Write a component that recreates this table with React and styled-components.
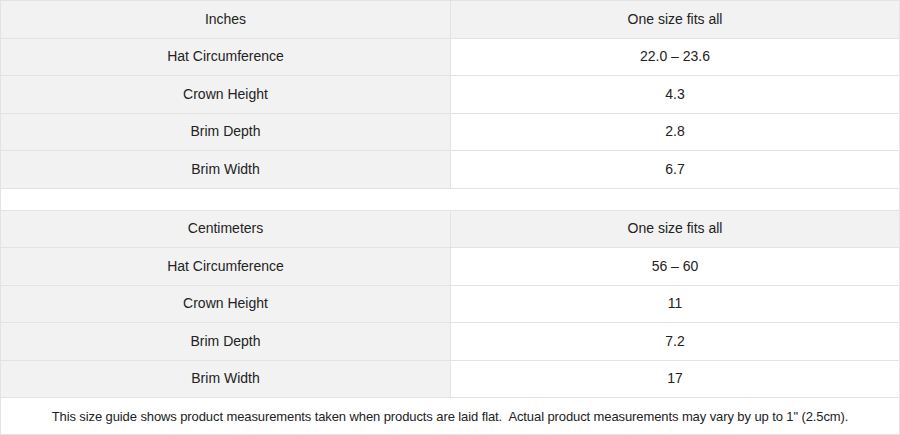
import React from 'react'
import styled, { createGlobalStyle } from 'styled-components'

const GlobalStyle = createGlobalStyle`
  body {
    margin: 0;
    background: #fff;
    font-family: "Liberation Sans", Arial, sans-serif;
    color: #222;
  }
`

const Guide = styled.div`
  width: 900px;
  height: 435px;
  box-sizing: border-box;
  border: 1px solid #e3e3e3;
  display: flex;
  flex-direction: column;
`

const Row = styled.div`
  display: grid;
  grid-template-columns: 449px 1fr;
  height: 37.5px;
  box-sizing: border-box;
  border-bottom: 1px solid #e3e3e3;
`

const Cell = styled.div`
  display: flex;
  align-items: center;
  justify-content: center;
  font-size: 14px;
  padding-bottom: 1px;
  background: ${p => (p.$shaded ? '#f2f2f2' : '#fff')};
  & + & {
    border-left: 1px solid #e3e3e3;
  }
`

const Spacer = styled.div`
  height: 22px;
  box-sizing: border-box;
  border-bottom: 1px solid #e3e3e3;
`

const Note = styled.div`
  flex: 1;
  display: flex;
  align-items: center;
  justify-content: center;
  font-size: 13px;
  letter-spacing: -0.1px;
  white-space: pre;
`

const inches = [
  ['Hat Circumference', '22.0 – 23.6'],
  ['Crown Height', '4.3'],
  ['Brim Depth', '2.8'],
  ['Brim Width', '6.7'],
]

const cm = [
  ['Hat Circumference', '56 – 60'],
  ['Crown Height', '11'],
  ['Brim Depth', '7.2'],
  ['Brim Width', '17'],
]

function Section({ unit, rows }) {
  return (
    <>
      <Row>
        <Cell $shaded>{unit}</Cell>
        <Cell $shaded>One size fits all</Cell>
      </Row>
      {rows.map(([label, value]) => (
        <Row key={label}>
          <Cell $shaded>{label}</Cell>
          <Cell>{value}</Cell>
        </Row>
      ))}
    </>
  )
}

export default function App() {
  return (
    <>
      <GlobalStyle />
      <Guide>
        <Section unit="Inches" rows={inches} />
        <Spacer />
        <Section unit="Centimeters" rows={cm} />
        <Note>
          {'This size guide shows product measurements taken when products are laid flat.  Actual product measurements may vary by up to 1" (2.5cm).'}
        </Note>
      </Guide>
    </>
  )
}
